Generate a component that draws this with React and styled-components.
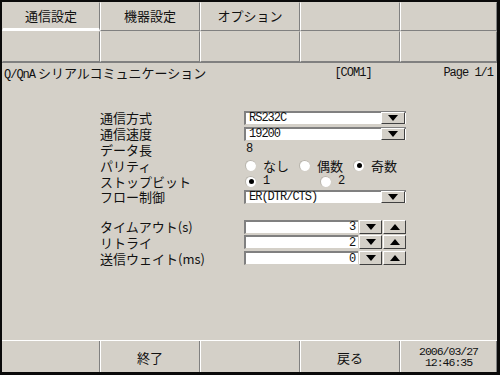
import React from 'react';
import styled, { createGlobalStyle } from 'styled-components';

// Panel colours of the old touch-screen settings page
const FACE = '#d4d0c8';
const SHADOW = '#808080';
const LIGHT = '#ffffff';
const JP = '"Noto Sans CJK JP", "DejaVu Sans", sans-serif';
const MONO = '"Liberation Mono", "DejaVu Sans Mono", monospace';

const Global = createGlobalStyle`
  html, body { margin: 0; padding: 0; background: #000; }
  body { font-family: ${JP}; }
`;

const Screen = styled.div`
  width: 495px;
  height: 370px;
  border-style: solid;
  border-color: #0a0a0a;
  border-width: 2px 3px 3px 2px;
  background: ${FACE};
  display: flex;
  flex-direction: column;
  color: #111;
`;

const TabGrid = styled.div`
  display: grid;
  grid-template-columns: 98px 100px 100px 100px 97px;
  grid-template-rows: 29px 31px;
`;

const Cell = styled.div`
  box-sizing: border-box;
  border-top: 1px solid transparent;
  border-left: 1px solid ${(p) => (p.$first ? FACE : LIGHT)};
  border-right: 1px solid ${SHADOW};
  border-bottom: ${(p) => (p.$active ? `3px solid ${LIGHT}` : `1px solid ${SHADOW}`)};
  display: flex;
  align-items: center;
  justify-content: center;
  font-size: 13px;
  line-height: 1;
  padding-bottom: ${(p) => (p.$active ? 0 : 2)}px;
`;

const TitleBar = styled.div`
  display: grid;
  grid-template-columns: 1fr 104px 96px;
  height: 20px;
  align-items: center;
  border-top: 1px solid ${SHADOW};
  font-size: 13px;
  line-height: 1;
`;

const Title = styled.div`
  padding-left: 2px;
  white-space: nowrap;
`;

const Mono = styled.span`
  font-family: ${MONO};
  font-size: 12px;
  line-height: 1;
  letter-spacing: -1px;
`;

const Port = styled(Mono)`
  text-align: center;
  padding-left: 8px;
`;

const PageNo = styled(Mono)`
  text-align: right;
  padding-right: 4px;
`;

const Content = styled.div`
  flex: 1;
  padding: 27px 0 0 98px;
  display: flex;
  flex-direction: column;
  gap: 14px;
`;

const Form = styled.div`
  display: grid;
  grid-template-columns: 144px 162px;
  grid-auto-rows: 15.8px;
  align-items: center;
`;

const Label = styled.div`
  font-size: 13px;
  line-height: 1;
  white-space: nowrap;
`;

const Sunken = styled.div`
  box-sizing: border-box;
  height: 14px;
  background: #fff;
  border-top: 2px solid ${SHADOW};
  border-left: 2px solid ${SHADOW};
  border-bottom: 1px solid ${FACE};
  display: flex;
  align-items: center;
`;

const Select = styled(Sunken)`
  width: 162px;
  justify-content: space-between;
  padding-left: 1px;
`;

const Raised = styled.div`
  box-sizing: border-box;
  background: ${FACE};
  border-top: 1px solid ${LIGHT};
  border-left: 1px solid ${LIGHT};
  border-right: 1px solid #404040;
  border-bottom: 1px solid #404040;
  display: flex;
  align-items: center;
  justify-content: center;
  height: 13px;
`;

const DropBtn = styled(Raised)`
  width: 24px;
  height: 12px;
  margin-right: 1px;
`;

const Arrow = styled.span`
  width: 0;
  height: 0;
  border-left: 5px solid transparent;
  border-right: 5px solid transparent;
  ${(p) => (p.$up ? 'border-bottom: 6px solid #000;' : 'border-top: 6px solid #000;')}
`;

const Value = styled(Mono)`
  padding-left: 2px;
`;

const Radios = styled.div`
  display: flex;
  align-items: center;
`;

const RadioOpt = styled.div`
  width: 75px;
  display: flex;
  align-items: center;
  gap: 7px;
  font-size: 13px;
  line-height: 1;
`;

const Dot = styled.span`
  box-sizing: border-box;
  flex: none;
  width: 11px;
  height: 11px;
  border-radius: 50%;
  background: #fff;
  border-top: 1px solid #b8b4ac;
  border-left: 1px solid #b8b4ac;
  margin-left: 1px;
  display: flex;
  align-items: center;
  justify-content: center;
  &::after {
    content: '';
    width: 5px;
    height: 5px;
    border-radius: 50%;
    background: ${(p) => (p.$on ? '#000' : 'transparent')};
  }
`;

const Spinner = styled.div`
  display: flex;
  gap: 1px;
  align-items: center;
`;

const SpinField = styled(Sunken)`
  width: 115px;
  justify-content: flex-end;
  padding-right: 3px;
`;

const SpinBtn = styled(Raised)`
  width: 23px;
  height: 14px;
`;

const Footer = styled.div`
  display: grid;
  grid-template-columns: 98px 100px 100px 100px 97px;
  height: 31px;
  border-top: 1px solid ${LIGHT};
`;

const FootCell = styled(Cell)`
  border-top: none;
  border-bottom: none;
  padding: 2px 0 0;
  flex-direction: column;
`;

const Clock = styled(Mono)`
  font-size: 11.5px;
  line-height: 13px;
  text-align: center;
  margin-top: -2px;
`;

const tabs = ['通信設定', '機器設定', 'オプション', '', ''];

const Dropdown = ({ value }) => (
  <Select>
    <Value>{value}</Value>
    <DropBtn><Arrow /></DropBtn>
  </Select>
);

const Radio = ({ on, children }) => (
  <RadioOpt>
    <Dot $on={on} />
    {children}
  </RadioOpt>
);

const Spin = ({ value }) => (
  <Spinner>
    <SpinField><Mono>{value}</Mono></SpinField>
    <SpinBtn><Arrow /></SpinBtn>
    <SpinBtn><Arrow $up /></SpinBtn>
  </Spinner>
);

export default function App() {
  return (
    <>
      <Global />
      <Screen>
        <TabGrid>
          {tabs.map((t, i) => (
            <Cell key={'a' + i} $first={i === 0} $active={i === 0}>{t}</Cell>
          ))}
          {tabs.map((t, i) => (
            <Cell key={'b' + i} $first={i === 0} />
          ))}
        </TabGrid>

        <TitleBar>
          <Title><Mono>Q/QnA</Mono> シリアルコミュニケーション</Title>
          <Port>[COM1]</Port>
          <PageNo>Page 1/1</PageNo>
        </TitleBar>

        <Content>
          <Form>
            <Label>通信方式</Label>
            <Dropdown value="RS232C" />
            <Label>通信速度</Label>
            <Dropdown value="19200" />
            <Label>データ長</Label>
            <Value>8</Value>
            <Label>パリティ</Label>
            <Radios>
              <Radio>なし</Radio>
              <Radio>偶数</Radio>
              <Radio on>奇数</Radio>
            </Radios>
            <Label>ストップビット</Label>
            <Radios>
              <Radio on><Mono>1</Mono></Radio>
              <Radio><Mono>2</Mono></Radio>
            </Radios>
            <Label>フロー制御</Label>
            <Dropdown value="ER(DTR/CTS)" />
          </Form>

          <Form>
            <Label>タイムアウト(s)</Label>
            <Spin value="3" />
            <Label>リトライ</Label>
            <Spin value="2" />
            <Label>送信ウェイト(ms)</Label>
            <Spin value="0" />
          </Form>
        </Content>

        <Footer>
          <FootCell $first />
          <FootCell>終了</FootCell>
          <FootCell />
          <FootCell>戻る</FootCell>
          <FootCell>
            <Clock>2006/03/27</Clock>
            <Clock>12:46:35</Clock>
          </FootCell>
        </Footer>
      </Screen>
    </>
  );
}
